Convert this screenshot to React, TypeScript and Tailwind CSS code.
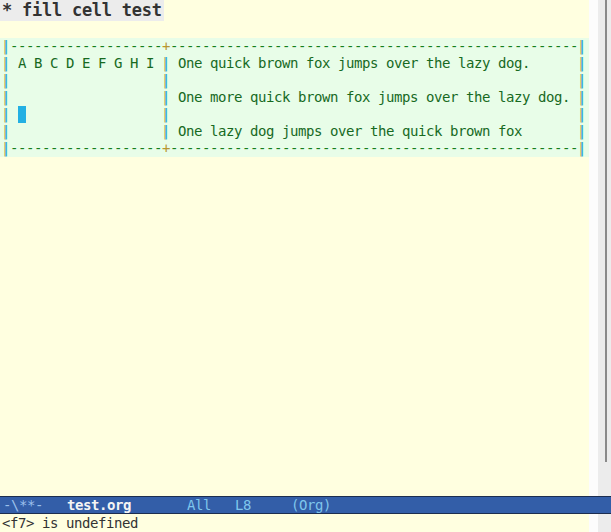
import React from 'react';

// table vertical rule: cyan glyph with an olive fringe
const Bar = () => (
  <span className="inline-block w-[8px] text-center text-[#1fb0d8] [text-shadow:-1px_0_#a89a3a] leading-[17px] align-top">
    |
  </span>
);

const Border = () => (
  <div className="h-[17px] pl-[2px] bg-[#e8fde8] whitespace-pre">
    <Bar />
    <span className="text-[#17801c]">{'-'.repeat(19)}</span>
    <span className="text-[#b8962e]">+</span>
    <span className="text-[#17801c]">{'-'.repeat(51)}</span>
    <Bar />
  </div>
);

const Row = ({ left, right }: { left: string; right: string }) => (
  <div className="h-[17px] pl-[2px] bg-[#e8fde8] whitespace-pre text-[#176a1f]">
    <Bar />
    {' ' + left.padEnd(17, ' ') + ' '}
    <Bar />
    {' ' + right.padEnd(49, ' ') + ' '}
    <Bar />
  </div>
);

export default function App() {
  return (
    <div className="w-[611px] h-[532px] flex flex-col overflow-hidden font-['DejaVu_Sans_Mono',monospace] text-[14px] tracking-[-0.43px] leading-[17px]">
      <div className="flex flex-1 min-h-0">
        <div className="w-[589px] bg-[#ffffe0]">
          <div className="h-[21px] leading-[21px]">
            <span className="inline-block h-[21px] pl-[2px] pr-[2px] bg-[#ececec] text-[#333333] font-bold text-[17px] tracking-[-0.25px]">
              * fill cell test
            </span>
          </div>
          <div className="h-[17px]" />
          <Border />
          <Row left="A B C D E F G H I" right="One quick brown fox jumps over the lazy dog." />
          <Row left="" right="" />
          <Row left="" right="One more quick brown fox jumps over the lazy dog." />
          <div className="h-[17px] pl-[2px] bg-[#e8fde8] whitespace-pre text-[#176a1f] flex">
            <Bar />
            <span className="inline-block w-[8px]" />
            <span className="inline-block w-[8px] h-[17px] bg-[#23b0e3]" />
            <span className="inline-block w-[136px]" />
            <Bar />
            <span className="inline-block w-[408px]" />
            <Bar />
          </div>
          <Row left="" right="One lazy dog jumps over the quick brown fox" />
          <Border />
        </div>
        <div className="w-[9px] bg-[#fcfcfc]" />
        <div className="flex-1 bg-[#ececec]">
          <div className="ml-[7px] w-[2px] h-[462px] bg-[#8a8a8a]" />
        </div>
      </div>
      <div className="h-[18px] bg-[#335ea8] border-y border-[#1c2d4f] pl-[3px] whitespace-pre leading-[16px]">
        <span className="text-[#9cc0ec]">-\**-   </span>
        <span className="text-[#f4f4f4] font-bold">test.org</span>
        <span className="text-[#7fc6ec]">{'       All   L8     (Org)'}</span>
      </div>
      <div className="h-[18px] flex">
        <div className="w-[589px] bg-[#ffffe0] pl-[2px] text-[#333333] leading-[18px]">&lt;f7&gt; is undefined</div>
        <div className="w-[9px] bg-[#fcfcfc]" />
        <div className="flex-1 bg-[#ececec]" />
      </div>
    </div>
  );
}
